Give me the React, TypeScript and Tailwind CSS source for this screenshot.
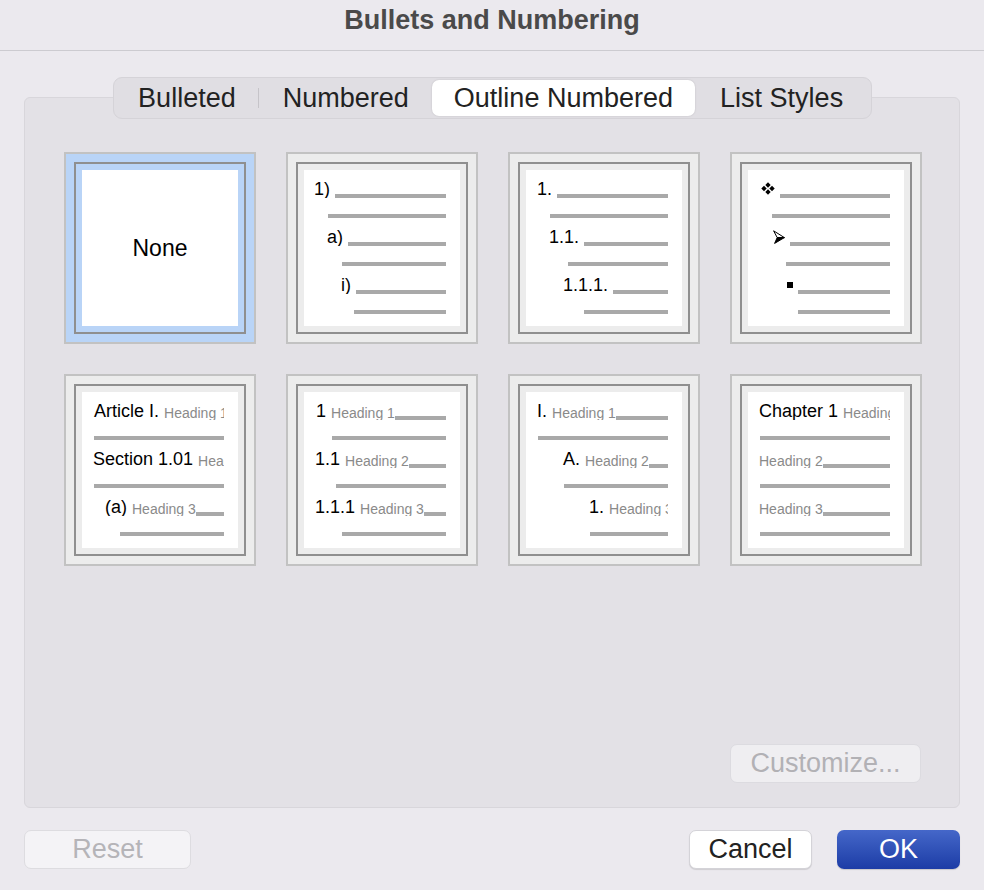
import React from "react";

type Entry = {
  pad: string; // indent of the numbered row
  label?: React.ReactNode;
  heading?: string;
  under: string; // indent of the plain line below
};

const Diamonds = () => (
  <svg width="14" height="13" viewBox="0 0 14 13" className="mb-[3px] shrink-0">
    <path d="M7 0.3 9.7 3 7 5.7 4.3 3Z M3 3.8 5.7 6.5 3 9.2 0.3 6.5Z M11 3.8 13.7 6.5 11 9.2 8.3 6.5Z M7 7.3 9.7 10 7 12.7 4.3 10Z" fill="#000" />
  </svg>
);

const Arrowhead = () => (
  <svg width="12" height="14" viewBox="0 0 12 14" className="mb-[2px] shrink-0">
    <path d="M0.6 0.8 11.4 7.6 4.2 7.6Z" fill="#fff" stroke="#000" strokeWidth="1" strokeLinejoin="round" />
    <path d="M4.2 7.6 11.4 7.6 1.6 13.4Z" fill="#000" stroke="#000" strokeWidth="1" strokeLinejoin="round" />
  </svg>
);

const Square = () => <span className="mb-[6px] h-[6px] w-[6px] shrink-0 bg-black" />;

const previews: Entry[][] = [
  [
    { pad: "pl-[10px]", label: "1)", under: "pl-[24px]" },
    { pad: "pl-[23px]", label: "a)", under: "pl-[38px]" },
    { pad: "pl-[37px]", label: "i)", under: "pl-[50px]" },
  ],
  [
    { pad: "pl-[11px]", label: "1.", under: "pl-[24px]" },
    { pad: "pl-[23px]", label: "1.1.", under: "pl-[42px]" },
    { pad: "pl-[37px]", label: "1.1.1.", under: "pl-[58px]" },
  ],
  [
    { pad: "pl-[13px]", label: <Diamonds />, under: "pl-[24px]" },
    { pad: "pl-[25px]", label: <Arrowhead />, under: "pl-[38px]" },
    { pad: "pl-[39px]", label: <Square />, under: "pl-[50px]" },
  ],
  [
    { pad: "pl-[12px]", label: "Article I.", heading: "Heading 1", under: "pl-[12px]" },
    { pad: "pl-[11px]", label: "Section 1.01", heading: "Heading 2", under: "pl-[12px]" },
    { pad: "pl-[23px]", label: "(a)", heading: "Heading 3", under: "pl-[38px]" },
  ],
  [
    { pad: "pl-[12px]", label: "1", heading: "Heading 1", under: "pl-[28px]" },
    { pad: "pl-[11px]", label: "1.1", heading: "Heading 2", under: "pl-[32px]" },
    { pad: "pl-[11px]", label: "1.1.1", heading: "Heading 3", under: "pl-[38px]" },
  ],
  [
    { pad: "pl-[11px]", label: "I.", heading: "Heading 1", under: "pl-[12px]" },
    { pad: "pl-[37px]", label: "A.", heading: "Heading 2", under: "pl-[38px]" },
    { pad: "pl-[63px]", label: "1.", heading: "Heading 3", under: "pl-[64px]" },
  ],
  [
    { pad: "pl-[11px]", label: "Chapter 1", heading: "Heading 1", under: "pl-[12px]" },
    { pad: "pl-[11px]", heading: "Heading 2", under: "pl-[12px]" },
    { pad: "pl-[11px]", heading: "Heading 3", under: "pl-[12px]" },
  ],
];

function Tile({ selected, children }: { selected?: boolean; children: React.ReactNode }) {
  return (
    <div
      className={`flex h-[192px] w-[192px] items-center justify-center border-2 border-[#c2c2c2] ${
        selected ? "bg-[#b9d4f7]" : "bg-[#ececec]"
      }`}
    >
      <div className="border-2 border-[#8f8f8f] p-[6px]">{children}</div>
    </div>
  );
}

function Preview({ rows }: { rows: Entry[] }) {
  return (
    <div className="flex h-[156px] w-[156px] flex-col bg-white pr-[14px]">
      {rows.map((r, i) => (
        <React.Fragment key={i}>
          <div className={`flex h-[28px] items-end overflow-hidden whitespace-nowrap ${r.pad}`}>
            {typeof r.label === "string" ? (
              <span className="shrink-0 text-[18px] leading-none text-black">{r.label}</span>
            ) : (
              r.label
            )}
            {r.heading && (
              <span className={`shrink-0 text-[14px] leading-none text-[#8a8a8a] ${r.label ? "ml-[5px]" : ""}`}>
                {r.heading}
              </span>
            )}
            <div className={`h-[4px] min-w-0 flex-1 bg-[#a9a9a9] ${r.heading ? "" : "ml-[5px]"}`} />
          </div>
          <div className={`flex h-[20px] items-end ${r.under}`}>
            <div className="h-[4px] flex-1 bg-[#a9a9a9]" />
          </div>
        </React.Fragment>
      ))}
    </div>
  );
}

const tabs = [
  { name: "Bulleted", w: "w-[143px]" },
  { name: "Numbered", w: "w-[173px]" },
  { name: "Outline Numbered", w: "w-[263px]" },
  { name: "List Styles", w: "w-[174px]" },
];

export default function App() {
  return (
    <div className="flex h-[890px] w-[984px] flex-col bg-[#ebe9ee] font-['Liberation_Sans',Arial,sans-serif] text-[#222]">
      {/* title bar */}
      <div className="h-[51px] border-b border-[#cccbd0] pt-[7px] text-center text-[27px] font-bold leading-none text-[#4a4a4a]">
        Bullets and Numbering
      </div>

      <div className="flex flex-col px-[24px] pt-[26px]">
        {/* segmented tabs */}
        <div className="relative z-10 mx-auto flex h-[42px] w-[759px] items-center rounded-[9px] border border-[#d5d3d8] bg-[#e0dee3] p-[2px]">
          {tabs.map((t, i) => (
            <React.Fragment key={t.name}>
              {i === 1 && <div className="h-[20px] w-px bg-[#c6c4c9]" />}
              <div
                className={`flex h-[36px] items-center justify-center text-[27px] leading-none ${t.w} ${
                  t.name === "Outline Numbered" ? "rounded-[7px] bg-white shadow-[0_0_2px_rgba(0,0,0,0.15)]" : ""
                }`}
              >
                {t.name}
              </div>
            </React.Fragment>
          ))}
        </div>

        {/* panel */}
        <div className="-mt-[22px] flex h-[711px] flex-col rounded-[6px] border border-[#d8d6db] bg-[#e3e1e6] pl-[39px] pt-[54px]">
          <div className="grid w-[858px] grid-cols-4 gap-[30px]">
            <Tile selected>
              <div className="flex h-[156px] w-[156px] items-center justify-center bg-white text-[23px] text-black">
                None
              </div>
            </Tile>
            {previews.map((rows, i) => (
              <Tile key={i}>
                <Preview rows={rows} />
              </Tile>
            ))}
          </div>
          <div className="flex-1" />
          <div className="flex justify-end pb-[24px] pr-[38px]">
            <button className="flex h-[39px] w-[191px] items-center justify-center rounded-[7px] border border-[#dcdbe0] bg-[#efeef1] text-[27px] leading-none text-[#b2b1b5]">
              Customize...
            </button>
          </div>
        </div>

        {/* footer buttons */}
        <div className="mt-[22px] flex items-center">
          <button className="flex h-[39px] w-[167px] items-center justify-center rounded-[7px] border border-[#dddce0] bg-[#f4f3f6] text-[27px] leading-none text-[#b5b4b8]">
            Reset
          </button>
          <div className="flex-1" />
          <button className="flex h-[39px] w-[123px] items-center justify-center rounded-[7px] border border-[#d4d3d8] bg-white text-[27px] leading-none text-[#222] shadow-[0_1px_1px_rgba(0,0,0,0.12)]">
            Cancel
          </button>
          <button className="ml-[25px] flex h-[39px] w-[123px] items-center justify-center rounded-[7px] bg-linear-to-b from-[#4567c9] to-[#1d3ca6] text-[27px] leading-none text-white shadow-[0_1px_1px_rgba(0,0,0,0.15)]">
            OK
          </button>
        </div>
      </div>
    </div>
  );
}
